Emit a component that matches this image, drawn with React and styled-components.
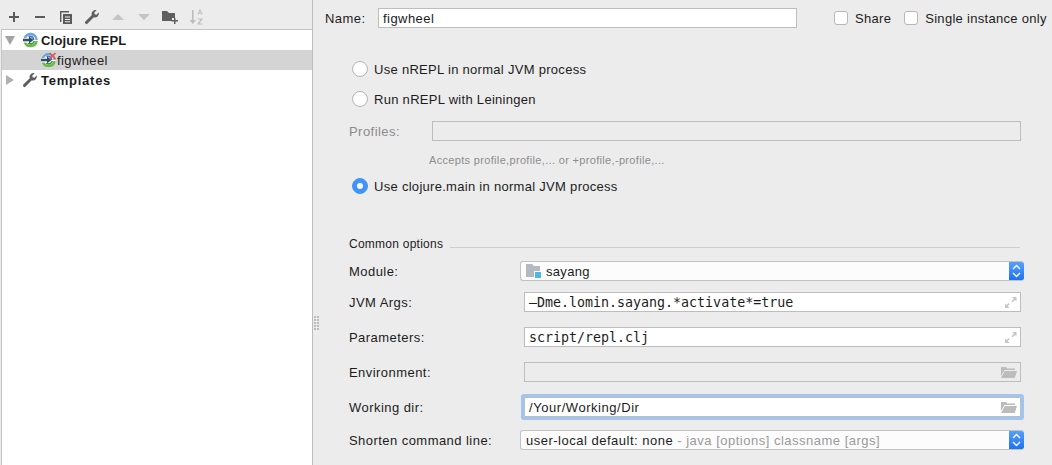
import React from "react";
import styled, { createGlobalStyle } from "styled-components";

const Global = createGlobalStyle`
  html, body { margin: 0; padding: 0; background: #ececec; }
  #root { width: 1052px; height: 465px; overflow: hidden; }
  * { box-sizing: border-box; }
`;

const Page = styled.div`
  display: flex;
  width: 1052px;
  height: 465px;
  background: #ececec;
  color: #1c1c1c;
  font: 13px/20px "Liberation Sans", Arial, sans-serif;
  letter-spacing: 0.45px;
  position: relative;
`;

const Sidebar = styled.aside`
  width: 313px;
  flex: none;
  display: flex;
  flex-direction: column;
  border-right: 1px solid #bdbdbd;
`;

const Toolbar = styled.div`
  height: 29px;
  flex: none;
  display: flex;
  align-items: center;
  padding: 5px 0 0 1px;
`;

const ToolButton = styled.span`
  width: 26px;
  height: 24px;
  display: flex;
  align-items: center;
  justify-content: center;
`;

const Tree = styled.div`
  flex: 1;
  background: #fff;
  border-top: 1px solid #c4c4c4;
  border-left: 1px solid #c4c4c4;
  margin-left: 1px;
`;

const TreeRow = styled.div`
  height: 20px;
  display: flex;
  align-items: center;
  padding-left: ${(p) => p.$indent}px;
  background: ${(p) => (p.$selected ? "#d4d4d4" : "transparent")};
  font-weight: ${(p) => (p.$bold ? 700 : 400)};
`;

const Arrow = styled.span`
  width: 0;
  height: 0;
  flex: none;
  margin-right: 8px;
  ${(p) =>
    p.$open
      ? `border-left: 5px solid transparent; border-right: 5px solid transparent; border-top: 9px solid #a3a3a3; margin-right: 7px;`
      : `border-top: 5px solid transparent; border-bottom: 5px solid transparent; border-left: 8px solid #b0b0b0;`}
`;

const TreeIcon = styled.svg`
  flex: none;
  margin-right: ${(p) => p.$gap}px;
`;

const Main = styled.main`
  flex: 1;
  min-width: 0;
  padding: 8px 0 0 36px;
  display: flex;
  flex-direction: column;
`;

const Row = styled.div`
  display: flex;
  align-items: center;
  height: 20px;
  flex: none;
  margin-top: ${(p) => p.$top || 0}px;
  margin-left: ${(p) => p.$left || 0}px;
  white-space: nowrap;
`;

/* every run of text sits one pixel under the centre of its 20px row */
const Text = styled.span`
  display: block;
  padding-top: 2px;
  flex: ${(p) => (p.$grow ? 1 : "none")};
  width: ${(p) => (p.$width ? `${p.$width}px` : "auto")};
  color: ${(p) => (p.$muted ? "#8b8b8b" : "inherit")};
  letter-spacing: ${(p) => (p.$spacing !== undefined ? `${p.$spacing}px` : "inherit")};
  font-size: ${(p) => p.$size || 13}px;
`;

const MonoText = styled.span`
  display: block;
  padding-top: 2px;
  font: 13.3px/20px "DejaVu Sans Mono", monospace;
  letter-spacing: 0;
`;

const Field = styled.div`
  width: ${(p) => p.$width}px;
  height: 20px;
  flex: none;
  display: flex;
  align-items: center;
  justify-content: space-between;
  padding: 0 3px 0 4px;
  background: ${(p) => (p.$disabled ? "#ececec" : "#fff")};
  border: 1px solid #bdbdbd;
  ${(p) => p.$focused && `box-shadow: 0 0 0 3px #a0c5f0; border-radius: 1px;`}
`;

const Check = styled.span`
  width: 14px;
  height: 14px;
  flex: none;
  background: #fff;
  border: 1px solid #b8b8b8;
  border-radius: 3px;
  margin-right: 7px;
`;

const RadioRow = styled(Row)`
  margin-left: 3px;
`;

const Radio = styled.span`
  width: 16px;
  height: 16px;
  flex: none;
  margin-right: 6px;
  border-radius: 50%;
  display: flex;
  align-items: center;
  justify-content: center;
  background: ${(p) => (p.$checked ? "#3f94f8" : "#fff")};
  border: 1px solid ${(p) => (p.$checked ? "#3f94f8" : "#b4b4b4")};
  &::after {
    content: "";
    display: ${(p) => (p.$checked ? "block" : "none")};
    width: 6px;
    height: 6px;
    border-radius: 50%;
    background: #fff;
  }
`;

const Hint = styled.span`
  margin-left: 80px;
  font-size: 11px;
  color: #8d8d8d;
  letter-spacing: 0.33px;
`;

const SectionLine = styled.span`
  height: 1px;
  width: 570px;
  margin: 8px 0 0 7px;
  background: #cfcfcf;
`;

const Combo = styled.div`
  width: 504px;
  height: 20px;
  margin-left: -4px;
  flex: none;
  display: flex;
  align-items: center;
  background: #fcfcfc;
  border: 1px solid #c2c2c2;
  border-right: 0;
  border-radius: 3px;
  padding-left: 5px;
  position: relative;
  overflow: hidden;
`;

const Faint = styled.span`
  color: #9a9a9a;
`;

const Stepper = styled.span`
  width: 15px;
  height: 20px;
  flex: none;
  margin-top: -1px;
  margin-bottom: -1px;
  display: flex;
  align-items: center;
  justify-content: center;
  background: linear-gradient(#5aa2fb, #1a70f5);
`;

const Grip = styled.span`
  position: absolute;
  left: 314px;
  top: 316px;
  width: 5px;
  height: 15px;
  opacity: 0.7;
  background-image: radial-gradient(circle at 1px 1px, #a8a8a8 1px, transparent 1.2px);
  background-size: 3px 3px;
`;

const Plus = () => (
  <svg width="12" height="12" viewBox="0 0 12 12">
    <path d="M5 1h2v4h4v2H7v4H5V7H1V5h4z" fill="#5a5a5a" />
  </svg>
);
const Minus = () => (
  <svg width="12" height="12" viewBox="0 0 12 12">
    <path d="M1 5h10v2H1z" fill="#5a5a5a" />
  </svg>
);
const Copy = () => (
  <svg width="14" height="14" viewBox="0 0 14 14">
    <path d="M1 1h9v1.400H2.400V12H1z" fill="#5a5a5a" />
    <path fillRule="evenodd" d="M4 4h9v10H4zM6 6.400v1h5v-1zM6 9v1h5V9zM6 11.300v1h5v-1z" fill="#5a5a5a" />
  </svg>
);
const WrenchPath = "M14.800 3.300a4 4 0 0 1-5 5L3.600 14.600a1.500 1.500 0 0 1-2.200-2.200L7.700 6.200a4 4 0 0 1 5-5L10.300 3.500l.4 1.800 1.800.4z";
const Wrench = () => (
  <svg width="16" height="16" viewBox="0 0 16 16">
    <path d={WrenchPath} fill="#5f5f5f" />
  </svg>
);
const Tri = ({ down }) => (
  <svg width="12" height="8" viewBox="0 0 12 8">
    <path d={down ? "M0 1h12L6 7z" : "M6 1l6 6H0z"} fill="#c4c4c4" />
  </svg>
);
const FolderPlus = () => (
  <svg width="16" height="14" viewBox="0 0 16 14">
    <path d="M0 1h5l2 2h6v5h-3v3H0z" fill="#5f5f5f" />
    <path d="M12 8h1.500v2H16v1.500h-2.500V14H12v-2.500H9.500V10H12z" fill="#5f5f5f" />
  </svg>
);
const SortAz = () => (
  <svg width="14" height="16" viewBox="0 0 14 16">
    <path d="M3 1h1.600v10H7l-3.200 4L.6 11H3z" fill="#bcbcbc" />
    <path d="M8.500 5.500l2-5h1l2 5h-1l-.4-1.100h-2.200l-.4 1.100zM10.200 3.500h1.600L11 1.500zM8.800 9.500h4.700v.9l-3.300 4h3.300v1H8.500v-.9l3.300-4H8.800z" fill="#bcbcbc" />
  </svg>
);

const ClojureIcon = ({ broken }) => (
  <TreeIcon width="16" height="16" viewBox="0 0 16 16" $gap={broken ? 1 : 3}>
    <circle cx="8.500" cy="8" r="7.500" fill="#fff" />
    <path d="M1.500 6a7.300 7.300 0 0 1 14.300 2H13.500A5 5 0 0 0 4.500 5.300V6z" fill="#6aa5dc" />
    <path d="M6.500 3.700a4.600 4.600 0 0 1 6 4.300h-1.800A3 3 0 0 0 6.500 5.300z" fill="#3f78bd" />
    <path d="M1.700 10.500h2.700a4.800 4.800 0 0 0 8.900-1.500h2.500A7.300 7.300 0 0 1 1.700 10.500z" fill="#6bb945" />
    <path d="M6 11h3.500A3 3 0 0 0 11.500 9H13a4.500 4.500 0 0 1-7 3z" fill="#3d9a3a" />
    <path d="M1 6.700h6V4.500L11.500 8 7 11.500V9.300H1z" fill="#2f4d63" />
    {broken && <path d="M9.500 1l6 6M15.500 1l-6 6" stroke="#e4574e" strokeWidth="1.700" />}
  </TreeIcon>
);

const Expand = () => (
  <svg width="13" height="13" viewBox="0 0 13 13">
    <path d="M8 1h4.500v4.500L11 4 8.600 6.300 7.500 5.200 9.800 2.800zM1 7.500l1.500 1.500 2-2 1.200 1.200-2 2L5.500 12H1z" fill="#c6c6c6" />
  </svg>
);
const OpenFolder = () => (
  <svg width="16" height="13" viewBox="0 0 16 13">
    <path d="M0 1h5l1.300 1.500H14V4H3.500L0 10z" fill="#bcbcbc" />
    <path d="M3.800 5H16l-2.300 7H0z" fill="#bcbcbc" />
  </svg>
);
const ModuleIcon = () => (
  <TreeIcon width="15" height="14" viewBox="0 0 15 14" $gap={5}>
    <path d="M0 0h6l2 2h6v5H8v6H0z" fill="#b2bac0" />
    <path d="M9 8h6v6H9z" fill="#4db8e8" />
  </TreeIcon>
);
const Updown = () => (
  <svg width="9" height="14" viewBox="0 0 9 14" fill="none" stroke="#fff" strokeWidth="1.400">
    <path d="M1 5l3.500-3.500L8 5M1 9l3.500 3.500L8 9" />
  </svg>
);

export default function App() {
  return (
    <Page>
      <Global />
      <Sidebar>
        <Toolbar>
          <ToolButton><Plus /></ToolButton>
          <ToolButton><Minus /></ToolButton>
          <ToolButton><Copy /></ToolButton>
          <ToolButton><Wrench /></ToolButton>
          <ToolButton><Tri /></ToolButton>
          <ToolButton><Tri down /></ToolButton>
          <ToolButton><FolderPlus /></ToolButton>
          <ToolButton><SortAz /></ToolButton>
        </Toolbar>
        <Tree>
          <TreeRow $indent={3} $bold>
            <Arrow $open />
            <ClojureIcon />
            <Text $spacing={0.2}>Clojure REPL</Text>
          </TreeRow>
          <TreeRow $indent={38} $selected>
            <ClojureIcon broken />
            <Text $spacing={0.4}>figwheel</Text>
          </TreeRow>
          <TreeRow $indent={4} $bold>
            <Arrow />
            <TreeIcon width="16" height="16" viewBox="0 0 16 16" $gap={3}>
              <path d={WrenchPath} fill="#5f5f5f" />
            </TreeIcon>
            <Text $spacing={0.75}>Templates</Text>
          </TreeRow>
        </Tree>
      </Sidebar>
      <Main>
        <Row $left={-24}>
          <Text $width={53}>Name:</Text>
          <Field $width={419}><Text>figwheel</Text></Field>
          <Row $left={37}><Check /><Text $spacing={0.3}>Share</Text></Row>
          <Row $left={13}><Check /><Text $spacing={0.3}>Single instance only</Text></Row>
        </Row>
        <RadioRow $top={31}><Radio /><Text $spacing={0.29}>Use nREPL in normal JVM process</Text></RadioRow>
        <RadioRow $top={10}><Radio /><Text $spacing={0.29}>Run nREPL with Leiningen</Text></RadioRow>
        <Row $top={12}>
          <Text $width={83} $muted>Profiles:</Text>
          <Field $width={589} $disabled />
        </Row>
        <Row $top={9}><Hint>Accepts profile,profile,... or +profile,-profile,...</Hint></Row>
        <RadioRow $top={6}><Radio $checked /><Text $spacing={0.29}>Use clojure.main in normal JVM process</Text></RadioRow>
        <Row $top={37}>
          <Text $size={12} $spacing={0.25}>Common options</Text>
          <SectionLine />
        </Row>
        <Row $top={8}>
          <Text $width={175}>Module:</Text>
          <Combo>
            <ModuleIcon />
            <Text $grow $spacing={0.3}>sayang</Text>
            <Stepper><Updown /></Stepper>
          </Combo>
        </Row>
        <Row $top={11}>
          <Text $width={175}>JVM Args:</Text>
          <Field $width={497}>
            <MonoText>—Dme.lomin.sayang.*activate*=true</MonoText>
            <Expand />
          </Field>
        </Row>
        <Row $top={15}>
          <Text $width={175}>Parameters:</Text>
          <Field $width={497}>
            <MonoText>script/repl.clj</MonoText>
            <Expand />
          </Field>
        </Row>
        <Row $top={15}>
          <Text $width={175}>Environment:</Text>
          <Field $width={497} $disabled><span /><OpenFolder /></Field>
        </Row>
        <Row $top={15}>
          <Text $width={175}>Working dir:</Text>
          <Field $width={497} $focused>
            <Text $spacing={0.55}>/Your/Working/Dir</Text>
            <OpenFolder />
          </Field>
        </Row>
        <Row $top={13}>
          <Text $width={175}>Shorten command line:</Text>
          <Combo>
            <Text $grow $spacing={0.5}>user-local default: none<Faint> - java [options] classname [args]</Faint></Text>
            <Stepper><Updown /></Stepper>
          </Combo>
        </Row>
      </Main>
      <Grip />
    </Page>
  );
}
